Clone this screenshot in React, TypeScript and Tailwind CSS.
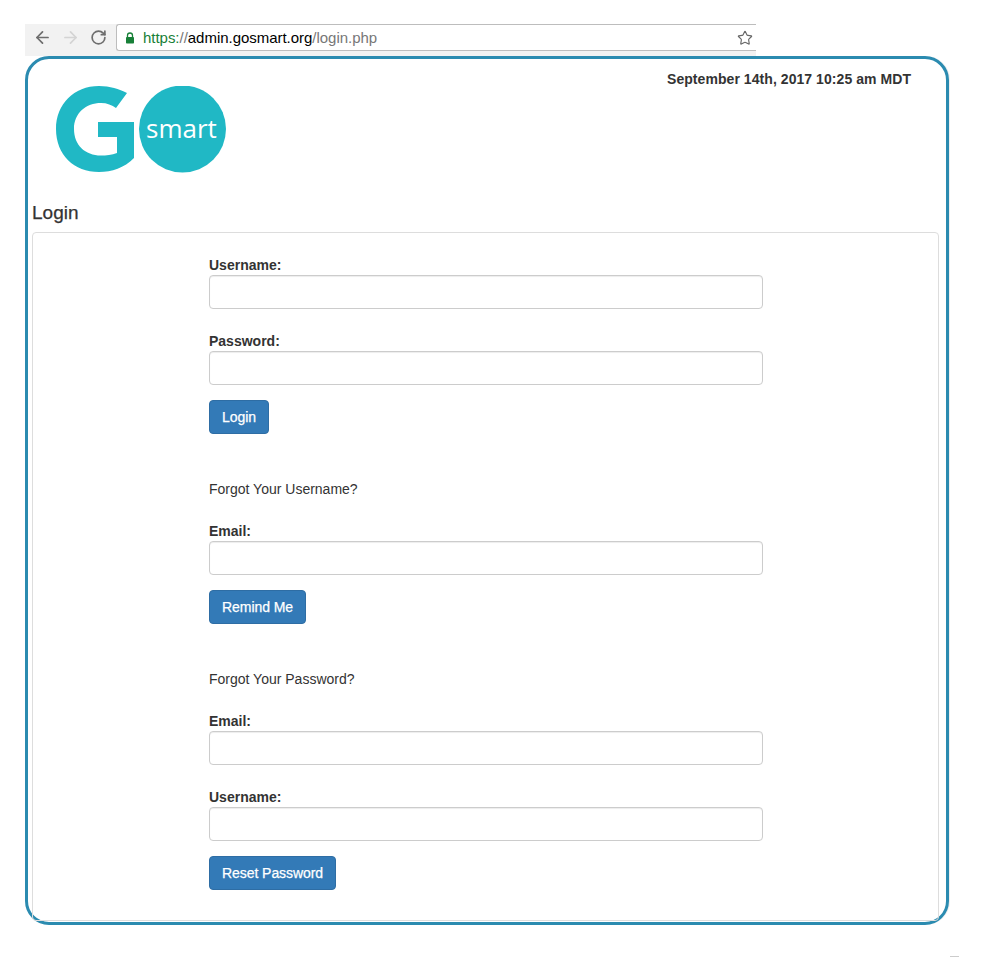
import { ArrowLeft, ArrowRight, RotateCw, Star } from 'lucide-react';

function Logo() {
  return (
    <svg width="172" height="87" viewBox="55 86 172 87" className="block">
      <path
        d="M127 93C119 89 110 86 99 86C74 86 56 104 56 129C56 155 74 172 99 172C112 172 124 168 134 158L134 122L98 122L98 137L117 137L117 153C112 155 106 155.5 101 155.5C85 155.5 74 145 74 129C74 113 86 103 101 103C107 103 112 105 116 108Z"
        fill="#20b8c5"
      />
      <circle cx="182.5" cy="129" r="43.5" fill="#20b8c5" />
      <text x="146" y="137.5" fill="#fff" fontSize="26" fontFamily="'Open Sans', sans-serif">
        smart
      </text>
    </svg>
  );
}

function Field({ label }: { label: string }) {
  return (
    <div className="pt-[7px] pb-[15px]">
      <label className="block h-5 text-[14px] leading-5 font-bold text-[#333]">{label}</label>
      <input
        type="text"
        className="block w-[554px] h-[34px] bg-white border border-[#ccc] rounded-[4px] shadow-[inset_0_1px_1px_rgba(0,0,0,0.075)]"
      />
    </div>
  );
}

function SubmitButton({ children }: { children: string }) {
  return (
    <button
      type="button"
      className="block h-[34px] px-3 bg-[#337ab7] border border-[#2e6da4] rounded-[4px] text-white text-[14px] leading-5 tracking-[-0.06px] [-webkit-text-stroke:0.25px_#ffffff]"
    >
      {children}
    </button>
  );
}

function BrowserBar() {
  return (
    <div className="flex w-[731px] h-8 items-start bg-[#f2f2f2]">
      <div className="flex w-[91px] h-[27px] items-center pl-2 gap-[9px]">
        <ArrowLeft size={19} strokeWidth={2.2} className="text-[#6e6e6e]" />
        <ArrowRight size={19} strokeWidth={2.2} className="text-[#d4d4d4]" />
        <RotateCw size={17} strokeWidth={2.4} className="text-[#6e6e6e] ml-[1px]" />
      </div>
      <div className="flex flex-1 h-[27px] items-center bg-white border border-r-0 border-[#bdbdbd] rounded-l-[3px] pl-[8px] pr-[3px]">
        <svg width="10" height="12" viewBox="0 0 10 12" className="shrink-0">
          <path d="M2.5 5V3.5a2.5 2.5 0 0 1 5 0V5" fill="none" stroke="#188038" strokeWidth="1.3" />
          <rect x="1" y="5" width="8" height="6.5" rx="0.8" fill="#188038" />
        </svg>
        <div className="ml-[8px] text-[15px] tracking-[-0.03px] leading-5 whitespace-nowrap">
          <span className="text-[#188038]">https:</span>
          <span className="text-[#777]">//</span>
          <span className="text-black">admin.gosmart.org</span>
          <span className="text-[#777]">/login.php</span>
        </div>
        <Star size={16} strokeWidth={1.7} className="ml-auto text-[#666]" />
      </div>
    </div>
  );
}

export default function App() {
  return (
    <div className="relative w-[985px] h-[957px] bg-white pt-6 pl-[25px] overflow-hidden font-['Liberation_Sans',Arial,sans-serif] text-[#333]">
      <BrowserBar />
      <div className="w-[924px] h-[869px] border-[3px] border-[#2b8bb0] rounded-[24px] shadow-[1px_0_0_#eeeeee] px-1">
        <div className="flex justify-between items-start h-[144px]">
          <div className="pl-[23px] pt-[27px]">
            <Logo />
          </div>
          <div className="pt-[10px] pr-[31px] text-[14px] leading-5 font-bold tracking-[0.06px]">
            September 14th, 2017 10:25 am MDT
          </div>
        </div>
        <h1 className="h-[29px] text-[19px] leading-5 font-normal text-[#333] [-webkit-text-stroke:0.25px_#333333]">Login</h1>
        <div className="w-[907px] h-[689px] border border-[#ddd] rounded-[4px] pl-[176px] pt-[15px]">
          <Field label="Username:" />
          <Field label="Password:" />
          <SubmitButton>Login</SubmitButton>
          <p className="mt-[45px] mb-[15px] text-[14px] leading-5">Forgot Your Username?</p>
          <Field label="Email:" />
          <SubmitButton>Remind Me</SubmitButton>
          <p className="mt-[45px] mb-[15px] text-[14px] leading-5">Forgot Your Password?</p>
          <Field label="Email:" />
          <Field label="Username:" />
          <SubmitButton>Reset Password</SubmitButton>
        </div>
      </div>
      <div className="absolute left-[950px] top-[956px] w-[9px] h-px bg-[#cccccc]" />
    </div>
  );
}
